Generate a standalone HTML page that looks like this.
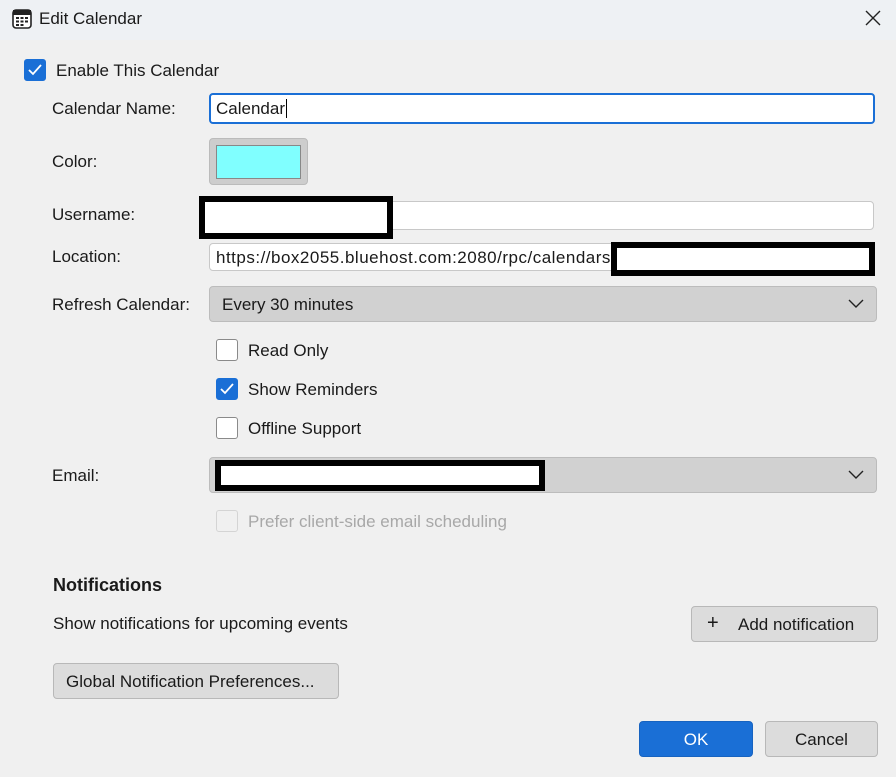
<!DOCTYPE html>
<html><head><meta charset="utf-8"><style>
body{margin:0;width:896px;height:777px;background:#f0f0f0;font-family:"Liberation Sans","DejaVu Sans",sans-serif;font-size:17px;color:#1a1a1a;position:relative;overflow:hidden}
.a{position:absolute}
.t{position:absolute;line-height:20px;white-space:nowrap}
.inp{position:absolute;background:#fff;border:1px solid #c8c8c8;border-radius:4px;box-sizing:border-box}
.cb{position:absolute;width:22px;height:22px;box-sizing:border-box;border:1px solid #8a8a8a;border-radius:3px;background:#fff}
.cb.on{background:#1a6fd6;border-color:#1a6fd6}
.dd{position:absolute;background:#d1d1d1;border:1px solid #bcbcbc;border-radius:4px;box-sizing:border-box}
.btn{position:absolute;background:#dcdcdc;border:1px solid #b8b8b8;border-radius:4px;box-sizing:border-box;text-align:center}
.red{position:absolute;background:#fff;border:6px solid #000;box-sizing:border-box}
</style></head><body>
<div class="a" style="left:0;top:0;width:896px;height:40px;background:#eef1f4"></div>
<svg class="a" style="left:11px;top:8px" width="22" height="22" viewBox="0 0 22 22"><rect x="2" y="2" width="18" height="18" rx="3" fill="#fff" stroke="#222" stroke-width="1.6"/><rect x="2" y="2" width="18" height="5" fill="#222"/><g fill="#222"><rect x="5" y="9" width="3" height="2"/><rect x="9.5" y="9" width="3" height="2"/><rect x="14" y="9" width="3" height="2"/><rect x="5" y="12.5" width="3" height="2"/><rect x="9.5" y="12.5" width="3" height="2"/><rect x="14" y="12.5" width="3" height="2"/><rect x="5" y="16" width="3" height="2"/><rect x="9.5" y="16" width="3" height="2"/></g></svg>
<div class="t" style="left:39px;top:9px">Edit Calendar</div>
<svg class="a" style="left:865px;top:10px" width="16" height="16"><path d="M1 1L15 15M15 1L1 15" stroke="#222" stroke-width="1.4"/></svg>

<div class="cb on" style="left:24px;top:59px"><svg width="20" height="20"><path d="M4 10l4 4 8-9" stroke="#fff" stroke-width="1.8" fill="none"/></svg></div>
<div class="t" style="left:56px;top:61px">Enable This Calendar</div>

<div class="t" style="left:52px;top:99px">Calendar Name:</div>
<div class="inp" style="left:209px;top:93px;width:666px;height:31px;border:2px solid #1a6fd6"></div>
<div class="t" style="left:216px;top:99px">Calendar<span style="border-left:1.5px solid #000;margin-left:1px"></span></div>

<div class="t" style="left:52px;top:152px">Color:</div>
<div class="a" style="left:209px;top:138px;width:99px;height:47px;background:#cdcdcd;border:1px solid #bbb;border-radius:4px;box-sizing:border-box"></div>
<div class="a" style="left:216px;top:145px;width:85px;height:34px;background:#80ffff;border:1px solid #888;box-sizing:border-box"></div>

<div class="t" style="left:52px;top:205px">Username:</div>
<div class="inp" style="left:209px;top:201px;width:665px;height:29px"></div>
<div class="red" style="left:199px;top:196px;width:194px;height:43px"></div>

<div class="t" style="left:52px;top:247px">Location:</div>
<div class="inp" style="left:209px;top:243px;width:665px;height:28px"></div>
<div class="t" style="left:216px;top:248px;letter-spacing:0.5px">https://box2055.bluehost.com:2080/rpc/calendars</div>
<div class="red" style="left:611px;top:242px;width:264px;height:34px"></div>

<div class="t" style="left:52px;top:295px">Refresh Calendar:</div>
<div class="dd" style="left:209px;top:286px;width:668px;height:36px"></div>
<div class="t" style="left:222px;top:295px">Every 30 minutes</div>
<svg class="a" style="left:848px;top:297px" width="16" height="12"><path d="M1 3l7 7 7-7" stroke="#222" stroke-width="1.4" fill="none"/></svg>

<div class="cb" style="left:216px;top:339px"></div><div class="t" style="left:248px;top:341px">Read Only</div>
<div class="cb on" style="left:216px;top:378px"><svg width="20" height="20"><path d="M4 10l4 4 8-9" stroke="#fff" stroke-width="1.8" fill="none"/></svg></div><div class="t" style="left:248px;top:380px">Show Reminders</div>
<div class="cb" style="left:216px;top:417px"></div><div class="t" style="left:248px;top:419px">Offline Support</div>

<div class="t" style="left:52px;top:466px">Email:</div>
<div class="dd" style="left:209px;top:457px;width:668px;height:36px"></div>
<div class="red" style="left:215px;top:460px;width:330px;height:31px"></div>
<svg class="a" style="left:848px;top:468px" width="16" height="12"><path d="M1 3l7 7 7-7" stroke="#222" stroke-width="1.4" fill="none"/></svg>

<div class="cb" style="left:216px;top:510px;border-color:#d4d4d4;background:#f0f0f0"></div><div class="t" style="left:248px;top:512px;color:#a8a8a8">Prefer client-side email scheduling</div>

<div class="t" style="left:53px;top:575px;font-weight:bold;font-size:18px">Notifications</div>
<div class="t" style="left:53px;top:614px">Show notifications for upcoming events</div>
<div class="btn" style="left:691px;top:606px;width:187px;height:36px"></div>
<div class="t" style="left:707px;top:613px;font-size:20px">+</div>
<div class="t" style="left:738px;top:615px">Add notification</div>
<div class="btn" style="left:53px;top:663px;width:286px;height:36px"></div>
<div class="t" style="left:66px;top:672px">Global Notification Preferences...</div>

<div class="btn" style="left:639px;top:721px;width:114px;height:36px;background:#1a6fd6;border-color:#1763c0"></div>
<div class="t" style="left:639px;top:730px;width:114px;text-align:center;color:#fff">OK</div>
<div class="btn" style="left:765px;top:721px;width:113px;height:36px"></div>
<div class="t" style="left:765px;top:730px;width:113px;text-align:center">Cancel</div>
</body></html>
